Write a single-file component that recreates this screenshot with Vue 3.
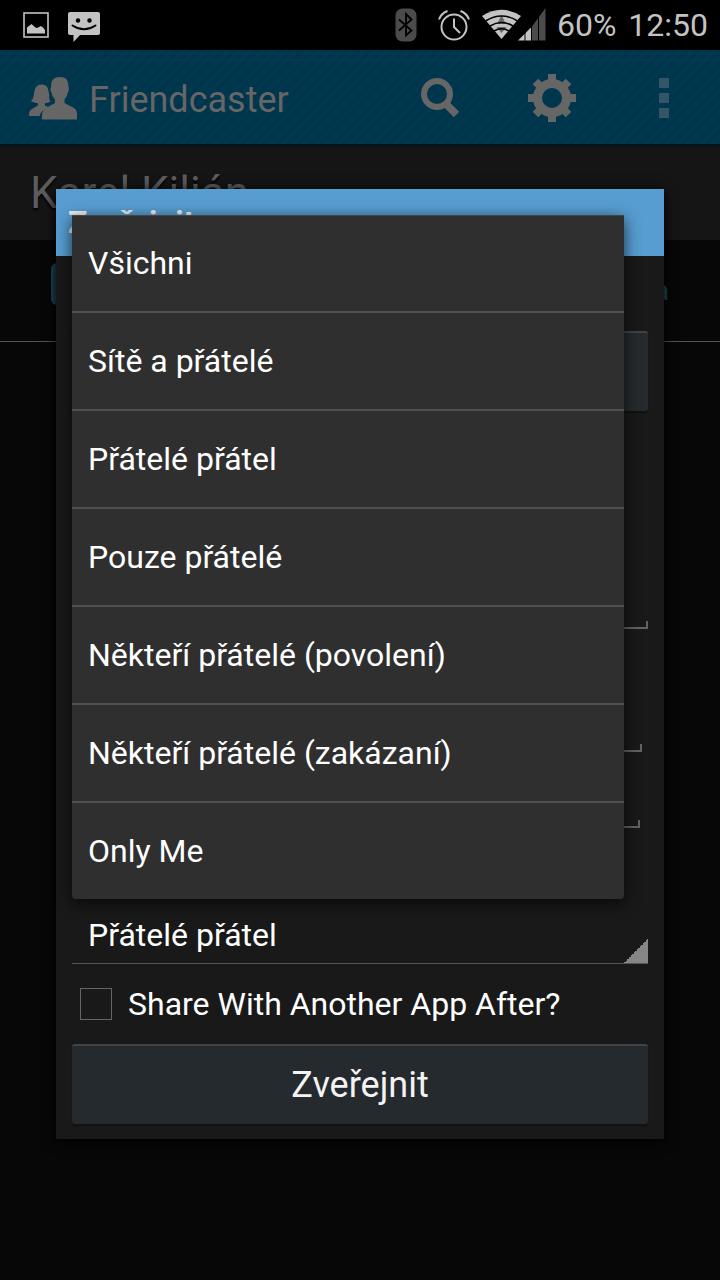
<script setup>
import { ref } from 'vue'

const audiences = [
  'Všichni',
  'Sítě a přátelé',
  'Přátelé přátel',
  'Pouze přátelé',
  'Někteří přátelé (povolení)',
  'Někteří přátelé (zakázaní)',
  'Only Me',
]
const audience = ref('Přátelé přátel')
const shareAfter = ref(false)
</script>

<template>
  <div class="screen">
    <div class="status">
      <svg class="st-pic" viewBox="0 0 26 26" width="26" height="26" aria-hidden="true">
        <rect x="1" y="1" width="24" height="24" fill="none" stroke="#c3c3c3" stroke-width="1.6" />
        <path d="M4 21.500V15.500l2-1.500 2.500-2 3 2.800 2 1.200 2.200-.8 2-1.200 2.300 1.500 2 2.500v3.500z" fill="#c3c3c3" />
      </svg>
      <svg class="st-msg" viewBox="0 0 32 34" width="32" height="34" aria-hidden="true">
        <path d="M2 4h28a2 2 0 0 1 2 2v19a2 2 0 0 1-2 2H12L5.500 34v-7H2a2 2 0 0 1-2-2V6a2 2 0 0 1 2-2z" fill="#c3c3c3" />
        <circle cx="10" cy="12.500" r="2.200" fill="#000" />
        <circle cx="21.500" cy="12.500" r="2.200" fill="#000" />
        <path d="M4.500 17.500q11.500 7.500 23 0" fill="none" stroke="#000" stroke-width="2" stroke-linecap="round" />
      </svg>
      <span class="spacer"></span>
      <svg class="st-bt" viewBox="0 0 22 34" width="22" height="34" aria-hidden="true">
        <rect x=".5" y=".5" width="21" height="33" rx="7" fill="#4b4b4b" />
        <path d="M4 11.500l12.500 11-5.500 5V6l5.500 5.500L4 22.500" fill="none" stroke="#000" stroke-width="1.800" />
      </svg>
      <svg class="st-alarm" viewBox="0 0 32 32" width="32" height="32" aria-hidden="true">
        <g fill="none" stroke="#c3c3c3" stroke-width="2">
          <circle cx="16" cy="18" r="12.500" />
          <path d="M16 9.500V18l6 6" />
          <path d="M1 10.500Q3 4.500 9.500 2M31 10.500Q29 4.500 22.500 2" />
        </g>
      </svg>
      <svg class="st-net" viewBox="0 0 64 34" width="64" height="34" aria-hidden="true">
        <path d="M0 8Q19.500-4.500 39 8L19.500 31z" fill="#c3c3c3" />
        <path d="M19.500 7l4.500 9h-9zM14.500 19h10l-5 6z" fill="#6a6a6a" />
        <path d="M3.500 13q16-10 32 0M8 18q11.500-7 23 0M12 23q7.500-4.500 15 0" fill="none" stroke="#000" stroke-width="1.500" />
        <path d="M36 32.500L49.500 19v13.500z" fill="#c3c3c3" />
        <path d="M50 18.500L63.500 0v32.500H50z" fill="#4b4b4b" />
        <path d="M43 17v16M49.500 10v23M56.500 3v30" stroke="#000" />
      </svg>
      <span class="battery">60%</span>
      <span class="clock">12:50</span>
    </div>

    <header class="appbar">
      <svg class="logo" viewBox="0 0 48 43" width="48" height="43" aria-hidden="true">
        <g fill="#666">
          <path d="M12.500 7.500C7 7.500 5.500 12 5 17c-.4 3.500-1.300 5.500-3 7 2 1.500 4.500 2 7 2v2.500L3 32c-2 1-3 2.500-3 7h10.500c1-4 4-6.500 9-9l-3.500-1.500V26c2 0 3.800-.5 5.500-1.500-1-1-1.500-3.500-1.300-6.500l-.7-4c-.6-4-2.500-6.500-7-6.500z" />
          <path d="M31 0c-6 0-8.800 3-8.800 8 0 2-.7 2.500-.7 4.500s1 2.500 1.300 4c.5 2.500 1.500 4 3.200 6V26l-8 4.500c-3 1.500-5 4-5 8v4h35V38c0-4-1-6-4-7.500L35.500 26v-3.500c1.700-2 2.500-3.500 3-6 .4-1.500 1.400-2 1.400-4S39.300 10 39.300 8c0-5-2.300-8-8.300-8z" />
        </g>
      </svg>
      <h1>Friendcaster</h1>
      <span class="spacer"></span>
      <button class="act" aria-label="Hledat">
        <svg viewBox="0 0 48 48" width="48" height="48" aria-hidden="true">
          <circle cx="21" cy="20" r="13" fill="none" stroke="#666" stroke-width="6" />
          <path d="M29.500 29.500l11 11" stroke="#666" stroke-width="7.500" />
        </svg>
      </button>
      <button class="act" aria-label="Nastavení">
        <svg viewBox="0 0 48 48" width="48" height="48" aria-hidden="true">
          <g stroke="#666" stroke-width="8">
            <path d="M24 0v10M24 38v10M0 24h10M38 24h10M7.500 7.500l7 7M33.500 33.500l7 7M40.500 7.500l-7 7M14.500 33.500l-7 7" />
            <circle cx="24" cy="24" r="14.500" fill="none" stroke-width="9" />
          </g>
        </svg>
      </button>
      <button class="act" aria-label="Další možnosti">
        <svg viewBox="0 0 48 48" width="48" height="48" aria-hidden="true">
          <path d="M19 4h10v10H19zM19 19h10v10H19zM19 34h10v10H19z" fill="#335566" />
        </svg>
      </button>
    </header>

    <section class="profile"><h2>Karel Kilián</h2></section>
    <nav class="tabs">
      <span class="tab-icon"></span>
      <a href="#fotka">Fotka</a>
    </nav>

    <form class="dialog" @submit.prevent>
      <h3>Zveřejnit</h3>
      <div class="body">
        <button type="button" class="btn picker" aria-label="Vybrat"></button>
        <input class="field message" type="text" aria-label="Zpráva" />
        <input class="field place" type="text" aria-label="Místo" />
        <input class="field tags" type="text" aria-label="Přátelé" />
        <div class="spin">
          <select v-model="audience" aria-label="Soukromí">
            <option v-for="a in audiences" :key="a">{{ a }}</option>
          </select>
        </div>
        <label class="check">
          <input type="checkbox" v-model="shareAfter" />
          <span>Share With Another App After?</span>
        </label>
        <button type="submit" class="btn">Zveřejnit</button>
      </div>
      <ul class="menu">
        <li v-for="a in audiences" :key="a">
          <button type="button" @click="audience = a">{{ a }}</button>
        </li>
      </ul>
    </form>
  </div>
</template>

<style>
body {
  background: #070707;
}
</style>

<style scoped>
.screen {
  position: relative;
  min-height: 100vh;
  background: #070707;
  font-family: Roboto, "Noto Sans", sans-serif;
  color: #fff;
}
.screen * {
  box-sizing: border-box;
}
svg {
  display: block;
  flex: none;
}
h1, h2, h3, ul {
  margin: 0;
  padding: 0;
  font-weight: 400;
}
button, input, select {
  font: inherit;
  color: inherit;
  margin: 0;
  border: 0;
  border-radius: 0;
}
.spacer {
  flex: 1;
}
.status {
  display: flex;
  align-items: center;
  height: 50px;
  padding: 0 12px 0 23px;
  background: #000;
  color: #c3c3c3;
  font-size: 32px;
}
.st-msg {
  margin-left: 19px;
}
.st-alarm {
  margin-left: 21px;
}
.st-net {
  margin-left: 12px;
}
.battery {
  margin-left: 11px;
}
.clock {
  margin-left: 12px;
}
.appbar {
  display: flex;
  align-items: center;
  height: 96px;
  padding: 2px 0 0 29px;
  border-bottom: 2px solid #00141e;
  background: repeating-linear-gradient(135deg, #00384f 0 4px, #00354b 4px 8px);
}
.appbar h1 {
  margin-left: 12px;
  padding-top: 4px;
  font-size: 36px;
  color: #666;
}
.act {
  display: flex;
  justify-content: center;
  width: 112px;
  padding: 0;
  background: none;
}
.profile {
  height: 94px;
  padding: 0 30px;
  background: #151515;
}
.profile h2 {
  font-size: 44px;
  line-height: 94px;
  color: #5c5c5c;
  text-shadow: 0 2px 2px #000;
}
.tabs {
  display: flex;
  align-items: center;
  justify-content: space-between;
  height: 102px;
  padding: 0 51px;
  border-bottom: 1px solid #555;
  font-size: 28px;
}
.tab-icon {
  width: 46px;
  height: 42px;
  margin-bottom: 14px;
  border-radius: 6px;
  background: #1e4656;
}
.tabs a {
  color: #235266;
  text-decoration: none;
}
.dialog {
  position: absolute;
  top: 189px;
  left: 56px;
  right: 56px;
  background: #191919;
  box-shadow: 0 2px 12px #000;
}
.dialog h3 {
  padding: 0 12px;
  background: #579dd1;
  color: #eee;
  font-size: 32px;
  font-weight: 700;
  line-height: 67px;
}
.body {
  display: flex;
  flex-direction: column;
  padding: 75px 16px 15px;
}
.btn {
  height: 80px;
  border-top: 2px solid #3d4347;
  border-radius: 3px;
  background: #252a2e;
  box-shadow: 0 2px 1px #121212;
  color: #f3f3f3;
  font-size: 36px;
}
.field {
  height: 64px;
  background:
    linear-gradient(#626262, #626262) left bottom / 2px 8px no-repeat,
    linear-gradient(#626262, #626262) right bottom / 2px 8px no-repeat,
    linear-gradient(#626262, #626262) left bottom / 100% 2px no-repeat;
  padding: 0 8px;
  font-size: 32px;
}
.message {
  height: 202px;
  margin-top: 16px;
}
.place {
  margin: 59px 6px 0;
}
.tags {
  margin: 12px 8px 0;
}
.spin {
  display: flex;
  margin-top: 79px;
  background: linear-gradient(135deg, transparent 50%, #868686 50%) right bottom / 24px 24px no-repeat;
  border-bottom: 1px solid #555;
}
.spin select {
  flex: 1;
  height: 56px;
  padding: 0 16px;
  background: none;
  appearance: none;
  font-size: 32px;
}
.spin option {
  background: #2f2f2f;
}
.check {
  display: flex;
  align-items: center;
  gap: 16px;
  height: 80px;
  padding-left: 8px;
  font-size: 32px;
}
.check input {
  appearance: none;
  width: 32px;
  height: 32px;
  border: 1px solid #666;
}
.check input:checked {
  background: #579dd1;
}
.menu {
  position: absolute;
  top: 26px;
  left: 16px;
  right: 40px;
  list-style: none;
  border-radius: 0 0 4px 4px;
  background: #2f2f2f;
  box-shadow: inset 0 1px #454545, 0 4px 16px rgba(0, 0, 0, 0.7);
}
.menu li + li {
  border-top: 2px solid #505050;
}
.menu button {
  display: block;
  width: 100%;
  height: 96px;
  padding: 0 16px;
  background: none;
  text-align: left;
  font-size: 32px;
}
</style>
